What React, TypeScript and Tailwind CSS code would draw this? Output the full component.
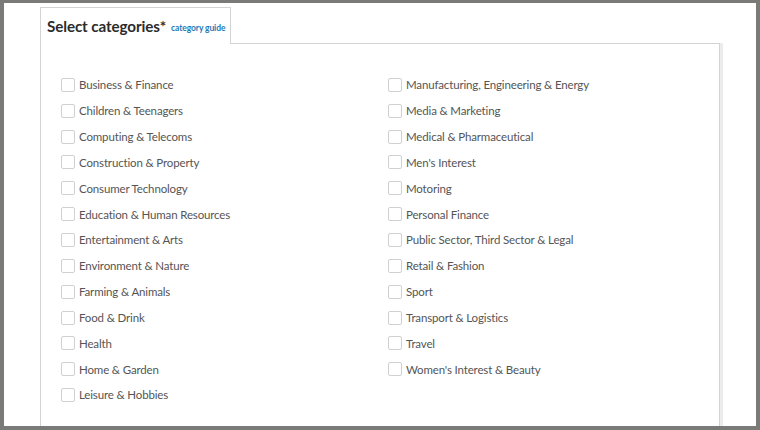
import React from "react";

const left = [
  "Business & Finance",
  "Children & Teenagers",
  "Computing & Telecoms",
  "Construction & Property",
  "Consumer Technology",
  "Education & Human Resources",
  "Entertainment & Arts",
  "Environment & Nature",
  "Farming & Animals",
  "Food & Drink",
  "Health",
  "Home & Garden",
  "Leisure & Hobbies",
];
const right = [
  "Manufacturing, Engineering & Energy",
  "Media & Marketing",
  "Medical & Pharmaceutical",
  "Men's Interest",
  "Motoring",
  "Personal Finance",
  "Public Sector, Third Sector & Legal",
  "Retail & Fashion",
  "Sport",
  "Transport & Logistics",
  "Travel",
  "Women's Interest & Beauty",
];

function Item({ label }: { label: string }) {
  return (
    <label className="flex h-[25.85px] items-center">
      <span className="h-[14px] w-[14px] shrink-0 rounded-[2px] border border-[#d0d0d0] bg-white" />
      <span className="ml-[4px] whitespace-nowrap text-[11.5px] tracking-[-0.15px] text-[#555]">{label}</span>
    </label>
  );
}

export default function App() {
  return (
    <div
      className="h-[430px] w-[760px] bg-[#7a7a78] pt-[3px] px-[4px] pb-[4px]"
      style={{ fontFamily: "Lato, 'Open Sans', sans-serif" }}
    >
      <div className="flex h-full flex-col overflow-hidden bg-white">
        <div className="ml-[36px] mt-[4px] flex">
          <div className="relative z-10 -mb-px flex h-[37px] w-[191px] items-center whitespace-nowrap border border-b-0 border-[#d4d4d4] bg-white pl-[6px] pt-[1px]">
            <span className="text-[15.2px] font-bold tracking-[-0.1px] text-[#2b2b2b]">Select categories*</span>
            <span className="ml-[5px] mt-[3px] text-[8.5px] font-bold tracking-[-0.1px] text-[#1d7bb8]">category guide</span>
          </div>
        </div>
        <div className="ml-[36px] mr-[36px] flex flex-1 border border-b-0 border-[#d4d4d4] pl-[20px] pt-[28px] shadow-[3px_0_0_#ececec]">
          <div className="w-[327px]">
            {left.map((l) => (
              <Item key={l} label={l} />
            ))}
          </div>
          <div>
            {right.map((l) => (
              <Item key={l} label={l} />
            ))}
          </div>
        </div>
      </div>
    </div>
  );
}
